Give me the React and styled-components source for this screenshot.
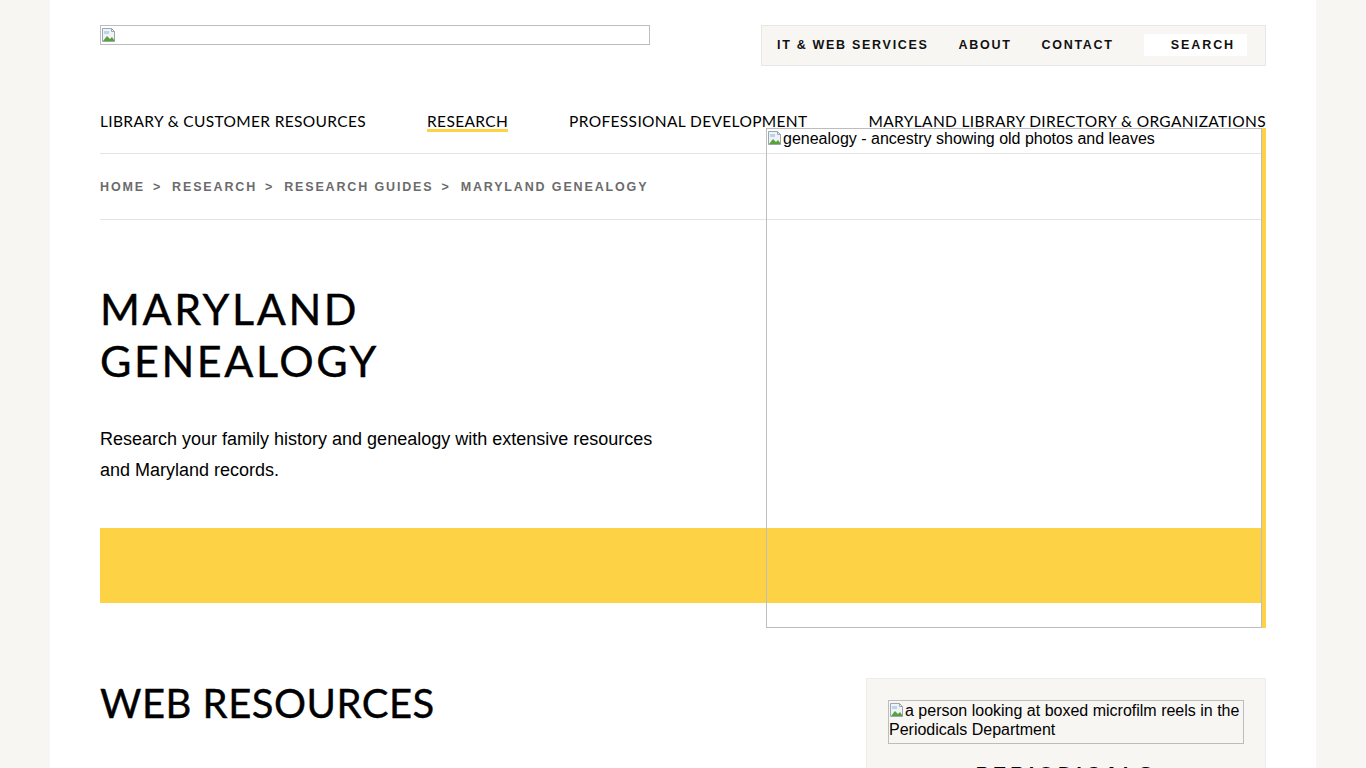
import React from 'react';
import styled, { createGlobalStyle } from 'styled-components';

const GlobalStyle = createGlobalStyle`
  html, body {
    margin: 0;
    padding: 0;
    background: #f8f6f3;
    font-family: "Liberation Sans", Arial, sans-serif;
    color: #000;
  }
`;

const colors = {
  cream: '#f8f6f3',
  yellow: '#fdd244',
  line: '#e4e4e4',
  frame: '#bdbdbd',
};

const Page = styled.div`
  margin: 0 50px;
  padding: 0 50px;
  background: #fff;
  min-height: 768px;
  position: relative;
`;

const Header = styled.header`
  display: flex;
  justify-content: space-between;
  align-items: flex-start;
  padding-top: 25px;
`;

const Placeholder = styled.div`
  box-sizing: border-box;
  border: 1px solid ${colors.frame};
  width: ${(p) => p.$w};
  height: ${(p) => p.$h};
  font-family: "Liberation Sans", Arial, sans-serif;
  font-size: 16px;
  line-height: 19px;
  color: #000;
  overflow: hidden;
  background: transparent;
`;

const BrokenIcon = () => (
  <svg width="16" height="16" viewBox="0 0 16 16" style={{ verticalAlign: '-2px' }}>
    <path d="M1.5 1.5h9l3 3v10h-12z" fill="#eef3f8" stroke="#9aa6b2" />
    <path d="M10.5 1.5v3h3" fill="none" stroke="#9aa6b2" />
    <path d="M2 14l4-5 3 3 2-2 2.5 3.5V14z" fill="#5aa13c" />
    <path d="M3 4h5v3H3z" fill="#bcd3ea" />
  </svg>
);

const UtilityNav = styled.nav`
  display: flex;
  align-items: center;
  box-sizing: border-box;
  height: 41px;
  width: 505px;
  padding: 0 18px 0 15px;
  background: ${colors.cream};
  border: 1px solid #e9e7e3;
`;

const UtilLink = styled.a`
  font-family: "Liberation Sans", Arial, sans-serif;
  font-weight: 700;
  font-size: 12.5px;
  letter-spacing: 1.7px;
  color: #111;
  text-decoration: none;
  margin-right: 30px;
  white-space: nowrap;
  line-height: 14px;
  margin-top: -2px;
`;

const SearchBox = styled.div`
  margin-left: auto;
  background: #fff;
  width: 106px;
  height: 22px;
  margin-top: -2px;
  display: flex;
  align-items: center;
  justify-content: flex-end;
  padding-right: 12px;
  box-sizing: border-box;
  font-weight: 700;
  font-size: 12.5px;
  letter-spacing: 1.9px;
  color: #111;
`;

const MainNav = styled.nav`
  display: flex;
  justify-content: space-between;
  padding-top: 46px;
  height: 41px;
  border-bottom: 1px solid ${colors.line};
`;

const NavItem = styled.a`
  font-family: Lato, "Open Sans", sans-serif;
  font-size: 15.5px;
  letter-spacing: 0.35px;
  color: #000;
  text-decoration: none;
  line-height: 18px;
  height: 17px;
  white-space: nowrap;
  border-bottom: ${(p) => (p.$active ? `3px solid ${colors.yellow}` : '3px solid transparent')};
`;

const Crumbs = styled.div`
  display: flex;
  align-items: center;
  height: 65px;
  border-bottom: 1px solid ${colors.line};
  font-family: "Liberation Sans", Arial, sans-serif;
  font-weight: 700;
  font-size: 12.5px;
  letter-spacing: 1.85px;
  color: #6b6b6b;
`;

const Sep = styled.span`
  margin: 0 10px 0 8px;
`;

const Hero = styled.section`
  position: relative;
`;

const HeroText = styled.div`
  width: 560px;
  padding-top: 63px;
`;

const Title = styled.h1`
  margin: 0;
  font-family: Lato, "Open Sans", sans-serif;
  font-weight: 400;
  font-size: 43px;
  line-height: 52px;
  letter-spacing: 2.6px;
  color: #000;
  -webkit-text-stroke: 0.4px #000;
`;

const Lead = styled.p`
  margin: 37px 0 0;
  font-family: "Liberation Sans", Arial, sans-serif;
  font-size: 18px;
  line-height: 31px;
  width: 560px;
`;

const Band = styled.div`
  margin-top: 42px;
  height: 75px;
  background: ${colors.yellow};
`;

const HeroImage = styled.div`
  position: absolute;
  top: -92px;
  right: 0;
  width: 500px;
  height: 500px;
  box-sizing: border-box;
  border-right: 4px solid ${colors.yellow};
`;

const Body = styled.div`
  display: flex;
  justify-content: space-between;
  margin-top: 75px;
`;

const SectionTitle = styled.h2`
  margin: 1px 0 0;
  font-family: Lato, "Open Sans", sans-serif;
  font-weight: 400;
  font-size: 40px;
  letter-spacing: 0.5px;
  line-height: 48px;
  -webkit-text-stroke: 0.4px #000;
`;

const SideCard = styled.aside`
  width: 400px;
  box-sizing: border-box;
  background: ${colors.cream};
  border: 1px solid #eeece8;
  padding: 21px 21px 0;
  height: 140px;
  overflow: hidden;
`;

const CardTitle = styled.h3`
  margin: 19px 0 0;
  text-align: center;
  font-family: "Liberation Sans", Arial, sans-serif;
  font-weight: 700;
  font-size: 20px;
  letter-spacing: 4px;
`;

export default function App() {
  return (
    <>
      <GlobalStyle />
      <Page>
        <Header>
          <Placeholder $w="550px" $h="20px">
            <BrokenIcon />
          </Placeholder>
          <UtilityNav>
            <UtilLink>IT &amp; WEB SERVICES</UtilLink>
            <UtilLink>ABOUT</UtilLink>
            <UtilLink>CONTACT</UtilLink>
            <SearchBox>SEARCH</SearchBox>
          </UtilityNav>
        </Header>
        <MainNav>
          <NavItem>LIBRARY &amp; CUSTOMER RESOURCES</NavItem>
          <NavItem $active>RESEARCH</NavItem>
          <NavItem>PROFESSIONAL DEVELOPMENT</NavItem>
          <NavItem>MARYLAND LIBRARY DIRECTORY &amp; ORGANIZATIONS</NavItem>
        </MainNav>
        <Crumbs>
          HOME<Sep>&gt;</Sep>RESEARCH<Sep>&gt;</Sep>RESEARCH GUIDES<Sep>&gt;</Sep>MARYLAND GENEALOGY
        </Crumbs>
        <Hero>
          <HeroText>
            <Title>
              MARYLAND
              <br />
              GENEALOGY
            </Title>
            <Lead>
              Research your family history and genealogy with extensive resources and Maryland records.
            </Lead>
          </HeroText>
          <Band />
          <HeroImage>
            <Placeholder $w="496px" $h="500px">
              <BrokenIcon />genealogy - ancestry showing old photos and leaves
            </Placeholder>
          </HeroImage>
        </Hero>
        <Body>
          <SectionTitle>WEB RESOURCES</SectionTitle>
          <SideCard>
            <Placeholder $w="356px" $h="44px">
              <BrokenIcon />a person looking at boxed microfilm reels in the Periodicals Department
            </Placeholder>
            <CardTitle>PERIODICALS</CardTitle>
          </SideCard>
        </Body>
      </Page>
    </>
  );
}
